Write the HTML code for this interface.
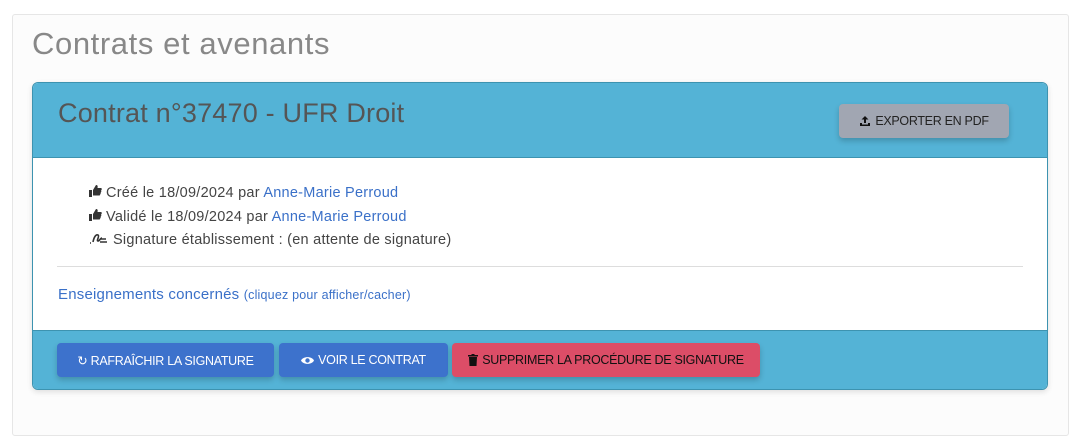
<!DOCTYPE html>
<html><head><meta charset="utf-8"><style>
html,body{margin:0;width:1081px;height:402px;overflow:hidden;background:#fff;font-family:"Liberation Sans",sans-serif;}
.outer{position:absolute;left:12px;top:14px;width:1055px;height:420px;background:#fcfcfc;border:1px solid #e6e6e6;border-radius:3px;}
h1{position:absolute;left:32px;top:26px;margin:0;font-weight:normal;font-size:31px;color:#888;letter-spacing:0.6px;}
.card{position:absolute;left:32px;top:82px;width:1014px;height:306px;border:1px solid #3d93b0;border-radius:6px;overflow:hidden;background:#fff;box-shadow:0 2px 6px rgba(0,0,0,.12);}
.hd{position:absolute;left:0;top:0;right:0;height:74px;background:#54b3d6;border-bottom:1px solid #3d93b0;}
.hd h2{position:absolute;left:25px;top:15px;margin:0;font-weight:normal;font-size:27px;color:#555;letter-spacing:0.2px;}
.btn{position:absolute;height:34px;border-radius:4px;font-size:12.5px;display:flex;align-items:center;justify-content:center;box-shadow:0 3px 6px rgba(0,0,0,.2);letter-spacing:-0.3px;}
.exp{left:806px;top:21px;width:170px;background:#a1a6b2;color:#222;}
.lines{position:absolute;left:56px;top:99px;font-size:14.5px;color:#444;line-height:23.5px;letter-spacing:0.25px;}
a{color:#3a70c8;text-decoration:none;}
hr{position:absolute;left:24px;top:183px;width:966px;margin:0;border:0;border-top:1px solid #ddd;}
.ens{position:absolute;left:25px;top:203px;font-size:15px;color:#3a70c8;letter-spacing:0.2px;}
.ens small{font-size:12.5px;}
.ft{position:absolute;left:0;top:247px;right:0;height:60px;background:#54b3d6;border-top:1px solid #3d93b0;}
.blue{background:#3d72cc;color:#fff;}
.red{background:#dc4d67;color:#111;}
svg{margin-right:4px}
</style></head><body>
<div class="outer"></div>
<h1>Contrats et avenants</h1>
<div class="card">
 <div class="hd"><h2>Contrat n°37470 - UFR Droit</h2>
  <div class="btn exp"><svg width="12" height="12" viewBox="0 0 12 12"><path d="M6 1L2.5 4.5H5V8H7V4.5H9.5Z M1 8V11H11V8H9V9.5H3V8Z" fill="#111"/></svg>EXPORTER EN PDF</div>
 </div>
 <div class="lines">
  <div><svg width="13" height="12" viewBox="0 0 13 12"><path d="M0 5h3v7H0z M4 5L7 0c1.5 0 2 1 1.5 3H12c1 0 1 2 0 2.5c.5 .5 .5 1.5-.3 2c.3 .6 0 1.3-.5 1.6c.2 .8-.3 1.4-1 1.4H4z" fill="#333"/></svg>Créé le 18/09/2024 par <a>Anne-Marie Perroud</a></div>
  <div><svg width="13" height="12" viewBox="0 0 13 12"><path d="M0 5h3v7H0z M4 5L7 0c1.5 0 2 1 1.5 3H12c1 0 1 2 0 2.5c.5 .5 .5 1.5-.3 2c.3 .6 0 1.3-.5 1.6c.2 .8-.3 1.4-1 1.4H4z" fill="#333"/></svg>Validé le 18/09/2024 par <a>Anne-Marie Perroud</a></div>
  <div><svg width="20" height="12" viewBox="0 0 20 12"><path d="M1 11h1M4 10c1-5 3-8 5-7s-2 6 0 6 2-3 4-3M11 7h6M11 10h7" stroke="#333" stroke-width="1.6" fill="none"/></svg>Signature établissement : (en attente de signature)</div>
 </div>
 <hr>
 <div class="ens">Enseignements concernés <small>(cliquez pour afficher/cacher)</small></div>
 <div class="ft">
  <div class="btn blue" style="left:24px;top:12px;width:217px">↻&nbsp;RAFRAÎCHIR LA SIGNATURE</div>
  <div class="btn blue" style="left:246px;top:12px;width:169px"><svg width="13" height="11" viewBox="0 0 13 11"><path d="M0 5.5C2 1 11 1 13 5.5C11 10 2 10 0 5.5Z" fill="#fff"/><circle cx="6.5" cy="5.5" r="2.2" fill="#3d72cc"/></svg>VOIR LE CONTRAT</div>
  <div class="btn red" style="left:419px;top:12px;width:308px"><svg width="10" height="12" viewBox="0 0 10 12"><path d="M0 1h3.5V0h3v1H10v1.5H0zM1 3h8l-.5 9h-7z" fill="#111"/></svg>SUPPRIMER LA PROCÉDURE DE SIGNATURE</div>
 </div>
</div>
</body></html>
